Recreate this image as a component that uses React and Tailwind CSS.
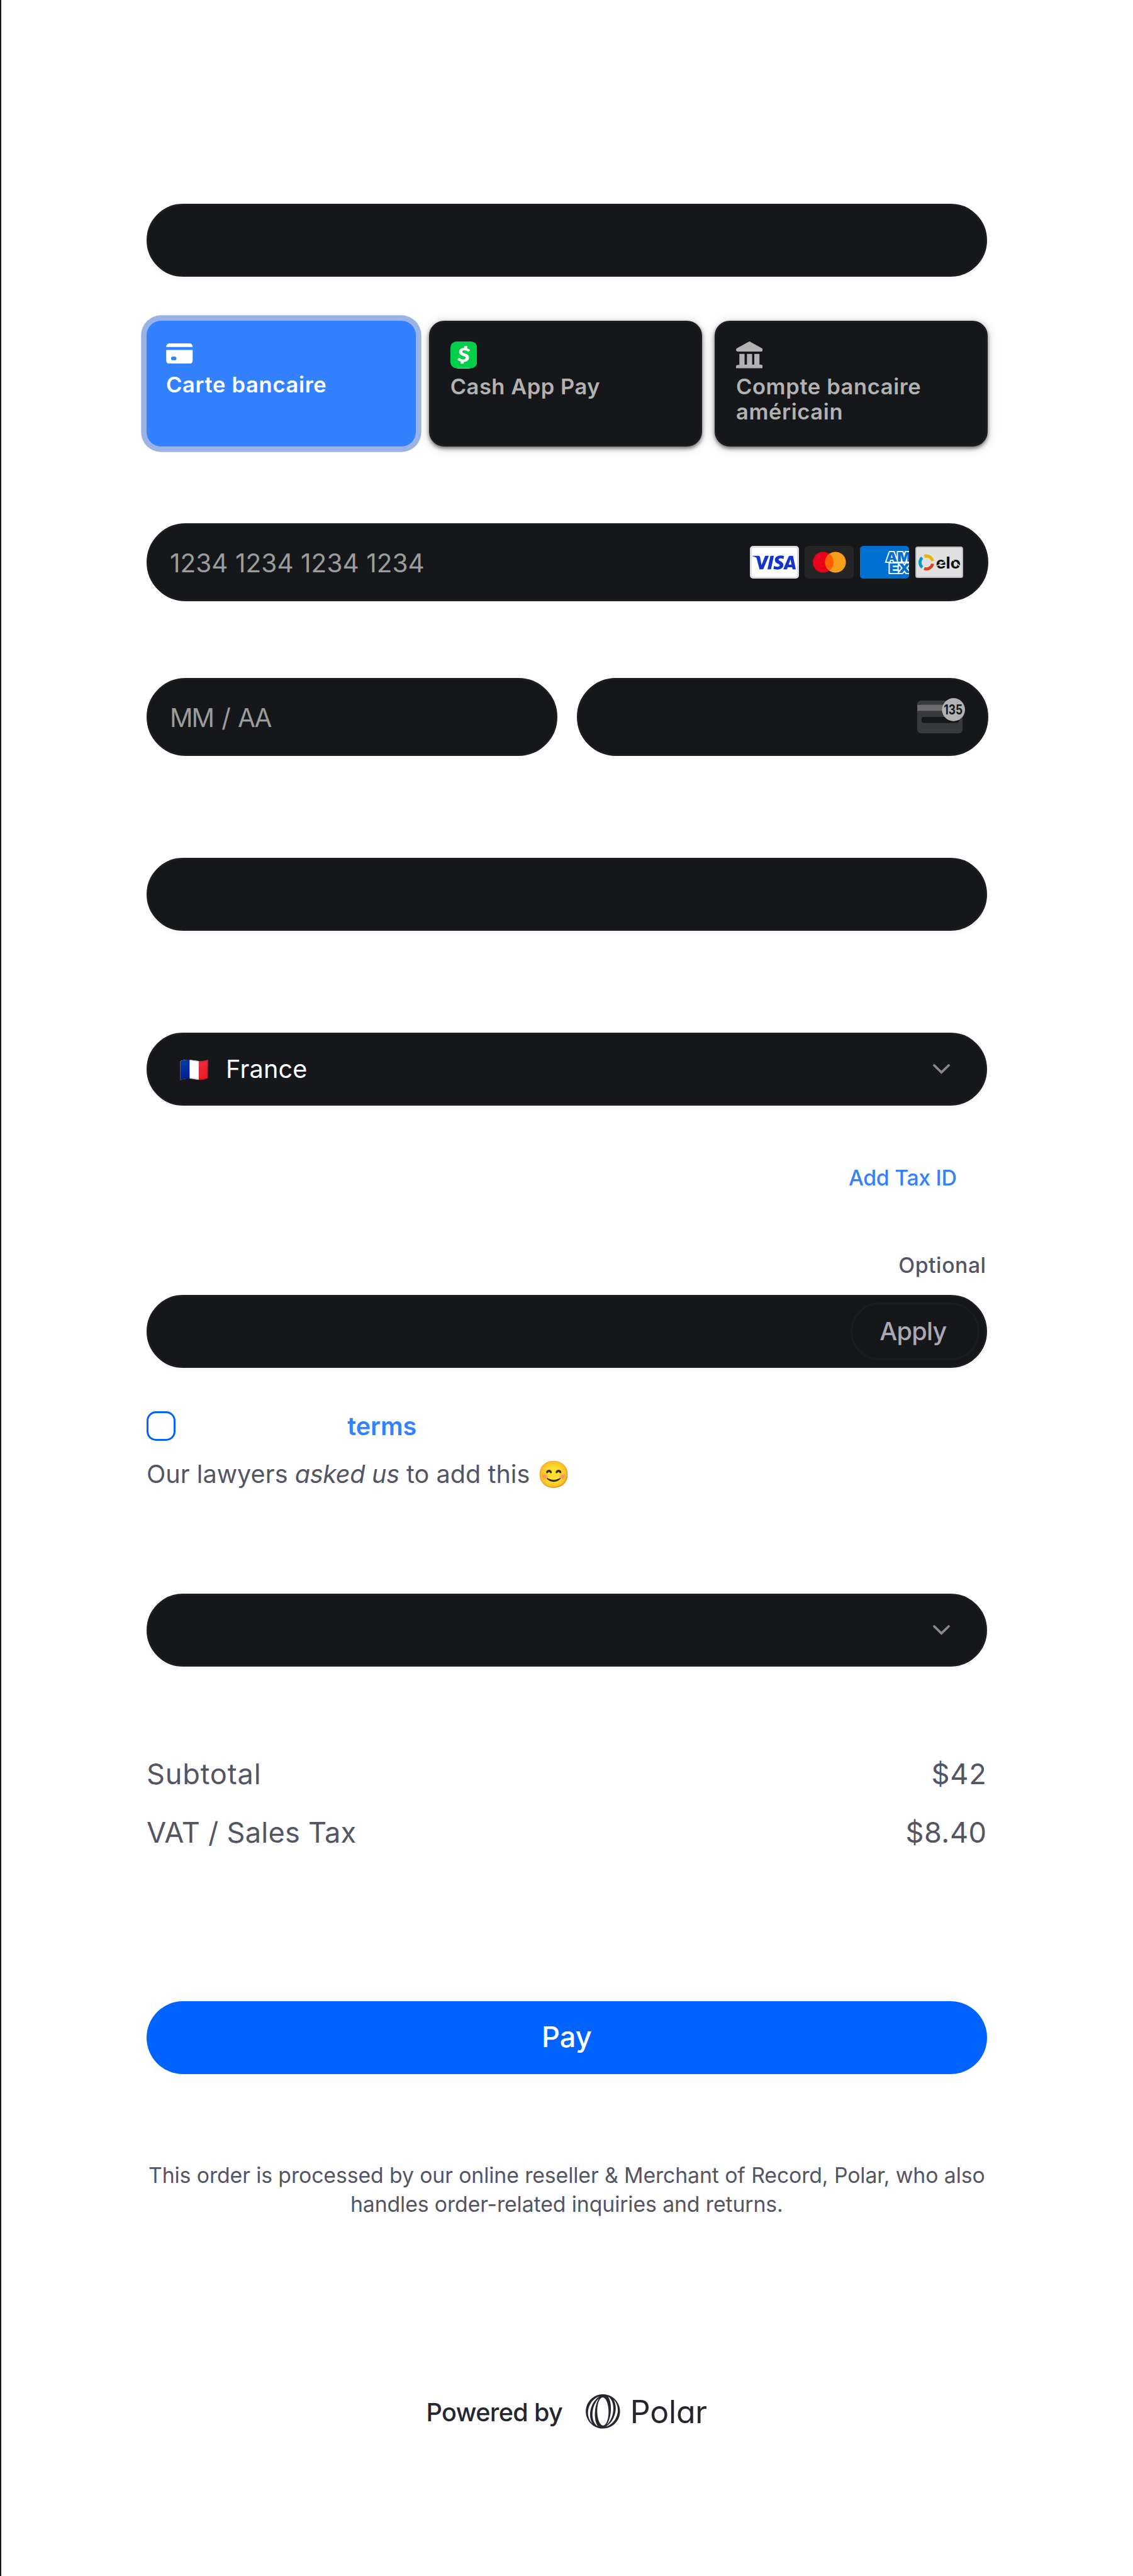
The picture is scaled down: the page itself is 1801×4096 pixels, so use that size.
import { SiVisa, SiCashapp } from "react-icons/si";

function Chevron() {
  return (
    <svg className="h-4 w-[27px] shrink-0 overflow-visible" viewBox="0 0 27 16" fill="none">
      <path d="M2 2 13.5 13 25 2" stroke="#8b8b8d" strokeWidth="3.8" strokeLinecap="round" />
    </svg>
  );
}

function Field({ className = "", children }) {
  return (
    <div
      className={`flex h-[116px] w-full shrink-0 items-center rounded-full border-[3px] border-[#1c1d21] bg-[#15171a] shadow-[0_3px_6px_rgba(0,0,0,0.05)] ${className}`}
    >
      {children}
    </div>
  );
}

function StripeField({ className = "", children }) {
  return (
    <div
      className={`flex h-[124px] items-center rounded-full border-[3px] border-[#1c1d21] bg-[#15171a] pl-[34px] text-[40.5px] leading-[50px] text-[#9c9c9b] ${className}`}
    >
      {children}
    </div>
  );
}

function Tab({ className = "", children }) {
  return (
    <div
      className={`flex h-[200px] w-[434px] shrink-0 flex-col items-start rounded-[24px] border-[3px] border-[#1c1d20] bg-[#15171a] pt-[30px] pl-[31px] text-[34.5px] leading-[40.3px] font-semibold text-[#b2b2b2] shadow-[0_3px_6px_rgba(0,0,0,0.55),0_2px_18px_rgba(0,0,0,0.16)] ${className}`}
    >
      {children}
    </div>
  );
}

function CardIcon() {
  return (
    <svg className="h-[32.5px] w-[42.5px]" viewBox="0 0 44 34" fill="#fff">
      <path d="M6 0H38Q44 0 44 6H0Q0 0 6 0Z" />
      <path
        fillRule="evenodd"
        d="M0 11H44V28Q44 34 38 34H6Q0 34 0 28ZM11 22A3 3 0 0 0 11 28H14A3 3 0 0 0 14 22Z"
      />
    </svg>
  );
}

function BankIcon() {
  return (
    <svg className="size-[42.5px]" viewBox="0 0 44 44" fill="#b2b2b2">
      <path d="M20.6 .5Q22-.4 23.4 .5L42.6 11.2Q44 12 44 14 44 16.5 41.5 16.5H2.500Q0 16.500 0 14 0 12 1.4 11.2Z" />
      <path d="M5.500 20.500H14V38H18V20.500H26.500V38H30V20.500H38.500V38H41.500Q44 38.500 44 41V44H0V41Q0 38.500 2.500 38.500H5.500Z" />
    </svg>
  );
}

function Visa() {
  return (
    <span className="flex h-[52px] w-[78px] items-center justify-center overflow-hidden rounded-[5px] border-[3px] border-[#dedede] bg-white">
      <SiVisa className="size-[69px] shrink-0 text-[#1434cb]" />
    </span>
  );
}

function Mastercard() {
  return (
    <svg className="h-[52px] w-[78px]" viewBox="0 0 81 54">
      <clipPath id="mc-left">
        <circle cx="30.700" cy="27" r="17.200" />
      </clipPath>
      <rect width="81" height="54" rx="6" fill="#252525" />
      <circle cx="30.700" cy="27" r="17.200" fill="#eb001b" />
      <circle cx="51" cy="27" r="17.200" fill="#f79e1b" />
      <circle cx="51" cy="27" r="17.200" fill="#ff5f00" clipPath="url(#mc-left)" />
    </svg>
  );
}

function Amex() {
  return (
    <svg className="h-[52px] w-[78px] rounded-[5px]" viewBox="0 0 81 54">
      <rect width="81" height="54" fill="#016fd0" />
      <g
        fill="#016fd0"
        stroke="#fff"
        strokeWidth="3.600"
        paintOrder="stroke"
        fontFamily="Inter, sans-serif"
        fontWeight="900"
        fontSize="21.500"
      >
        <text x="43" y="26" textLength="41" lengthAdjust="spacingAndGlyphs">AM</text>
        <text x="48" y="44.500" textLength="35" lengthAdjust="spacingAndGlyphs">EX</text>
      </g>
    </svg>
  );
}

function Elo() {
  return (
    <svg className="h-[50px] w-[76px]" viewBox="0 0 79 52">
      <rect x="1" y="1" width="77" height="50" rx="3" fill="#e0e0e0" stroke="#bdbdbd" strokeWidth="2" />
      <g fill="none" strokeWidth="5">
        <path d="M14.800 16.200A10.600 10.600 0 0 1 28.500 24" stroke="#e5b50f" />
        <path d="M28.600 28.500A10.600 10.600 0 0 1 14.600 36.400" stroke="#d94226" />
        <path d="M11.400 34.400A10.600 10.600 0 0 1 11.200 18.500" stroke="#0a96c8" />
      </g>
      <text x="34" y="36" fill="#0a0a0a" fontFamily="Inter, sans-serif" fontWeight="700" fontSize="26" textLength="41" lengthAdjust="spacingAndGlyphs">
        elo
      </text>
      <path d="M36 32 48 25M60 20 64 24M70 29 75 34" stroke="#e0e0e0" strokeWidth="1.500" />
    </svg>
  );
}

function CvcIcon() {
  return (
    <svg className="mb-[5px] h-14 w-[75px] overflow-visible" viewBox="0 0 78 58">
      <rect y="4" width="75" height="54" rx="6" fill="#38393b" />
      <rect y="11" width="75" height="10" fill="#6c6c6e" />
      <rect x="7" y="31" width="62" height="10" rx="4" fill="#15171a" />
      <circle cx="60" cy="19" r="19" fill="#b2b2b2" />
      <text x="44" y="27" fill="#15171a" fontFamily="Inter, sans-serif" fontWeight="700" fontSize="22" textLength="31" lengthAdjust="spacingAndGlyphs">
        135
      </text>
    </svg>
  );
}

function PolarMark() {
  return (
    <svg className="size-[54.6px]" viewBox="0 0 300 300" fill="#26272e">
      <path
        fillRule="evenodd"
        clipRule="evenodd"
        d="M66.4284 274.26C134.876 320.593 227.925 302.666 274.258 234.219C320.593 165.771 302.666 72.7222 234.218 26.3885C165.77 -19.9451 72.7209 -2.0181 26.3873 66.4297C-19.9465 134.877 -2.01938 227.927 66.4284 274.26ZM47.9555 116.67C30.8375 169.263 36.5445 221.893 59.2454 256.373C18.0412 217.361 7.27564 150.307 36.9437 92.318C55.9152 55.2362 87.5665 29.3937 122.5 18.3483C90.5911 36.7105 62.5549 71.8144 47.9555 116.67ZM175.347 283.137C211.377 272.606 244.211 246.385 263.685 208.322C293.101 150.825 282.768 84.4172 242.427 45.2673C264.22 79.7626 269.473 131.542 252.631 183.287C237.615 229.421 208.385 265.239 175.347 283.137ZM183.627 266.229C207.945 245.418 228.016 210.604 236.936 168.79C251.033 102.693 232.551 41.1978 195.112 20.6768C214.97 47.3945 225.022 99.2902 218.824 157.333C214.085 201.724 200.814 240.593 183.627 266.229ZM63.7178 131.844C49.5155 198.43 68.377 260.345 106.374 280.405C85.9962 254.009 75.5969 201.514 81.8758 142.711C86.5375 99.0536 99.4504 60.737 116.225 35.0969C92.2678 55.983 72.5384 90.4892 63.7178 131.844ZM199.834 149.561C200.908 217.473 179.59 272.878 152.222 273.309C124.853 273.742 101.797 219.039 100.724 151.127C99.6511 83.2138 120.968 27.8094 148.337 27.3777C175.705 26.946 198.762 81.648 199.834 149.561Z"
      />
    </svg>
  );
}

export default function App() {
  return (
    <div className="h-[4096px] overflow-hidden border-l-2 border-[#15171a] bg-white pt-[324px] pl-[231px] font-['Inter',sans-serif] text-[#545564]">
      <div className="flex w-[1335.6px] flex-col">
        <Field />

        <div className="mt-[70px] flex gap-[20.3px]">
          <div className="flex h-[200px] w-[428.4px] shrink-0 flex-col items-start rounded-[23px] bg-[#3381ff] pt-[35.5px] pl-[31px] text-[34.5px] leading-[40.3px] font-semibold text-white shadow-[0_0_0_8.700px_#99b3e4]">
            <CardIcon />
            <span className="mt-[14px] tracking-[0.68px]">Carte bancaire</span>
          </div>
          <Tab>
            <span className="rounded-[14px] bg-white">
              <SiCashapp className="size-[42.5px] text-[#00cf49]" />
            </span>
            <span className="mt-[9px] tracking-[0.5px]">Cash App Pay</span>
          </Tab>
          <Tab>
            <BankIcon />
            <span className="mt-[9px] tracking-[0.6px]">
              Compte bancaire
              <br />
              américain
            </span>
          </Tab>
        </div>

        <StripeField className="mt-[122px] w-[1337.6px] justify-between pr-[37px]">
          <span className="pt-[3px] tracking-[0.06px]">1234 1234 1234 1234</span>
          <span className="flex items-center gap-[9.6px]">
            <Visa />
            <Mastercard />
            <Amex />
            <Elo />
          </span>
        </StripeField>

        <div className="mt-[122px] flex w-[1337.6px] justify-between">
          <StripeField className="w-[653.4px]">
            <span className="pt-[3px] tracking-[-2.100px] [word-spacing:4px]">MM / AA</span>
          </StripeField>
          <StripeField className="w-[653.4px] justify-end pr-[35px]">
            <CvcIcon />
          </StripeField>
        </div>

        <Field className="mt-[162px]" />

        <Field className="mt-[162px] justify-between pr-[56px] pl-[49px]">
          <span className="flex items-center text-[39.600px] leading-[50px] text-white">
            <span className="w-[46px] text-[38px] whitespace-nowrap">🇫🇷</span>
            <span className="ml-[28px] tracking-[0.2px]">France</span>
          </span>
          <Chevron />
        </Field>

        <div className="mt-[92px] pr-[48px] text-right text-[33.8px] leading-[46px] font-medium tracking-[-0.3px] text-[#3381ff]">
          Add Tax ID
        </div>

        <div className="mt-[93px] pr-[1px] text-right text-[33.8px] leading-[46px] font-medium tracking-[0.5px]">
          Optional
        </div>
        <Field className="mt-[24px] justify-end pr-[8.400px]">
          <div className="flex h-[92.6px] w-[205.6px] items-center justify-center rounded-full border-[3px] border-[#1c1d21] pr-[6px] text-[39.600px] leading-[50px] font-medium tracking-[-0.7px] text-[#a9a8b4]">
            Apply
          </div>
        </Field>

        <div className="mt-[69.500px] flex h-[46px] items-center">
          <span className="size-[46.300px] rounded-[15px] border-[3px] border-[#0062ff]" />
          <span className="ml-[273px] text-[39.600px] leading-[46px] font-semibold tracking-[-0.15px] text-[#3381ff]">
            terms
          </span>
        </div>
        <div className="mt-[26px] flex h-[54px] items-center text-[39.600px] leading-[54px] tracking-[0.03px] whitespace-pre">
          <span>
            Our lawyers <em className="tracking-[-0.3px]">asked us</em> to add this{" "}
          </span>
          <span className="text-[42px]">😊</span>
        </div>

        <Field className="mt-[163.500px] justify-end pr-[56px]">
          <Chevron />
        </Field>

        <div className="mt-[141px] flex justify-between text-[45.2px] leading-[60px]">
          <span className="tracking-[0.78px]">Subtotal</span>
          <span className="tracking-[0.8px]">$42</span>
        </div>
        <div className="mt-[33px] flex justify-between text-[45.2px] leading-[60px]">
          <span className="tracking-[0.2px]">VAT / Sales Tax</span>
          <span className="tracking-[0.5px]">$8.40</span>
        </div>

        <div className="mt-[238px] flex h-[116px] items-center justify-center rounded-full bg-[#0062ff] pb-[2px] text-[45.2px] leading-[60px] font-medium text-white">
          Pay
        </div>

        <div className="mt-[138px] text-center text-[33.8px] leading-[46.3px] tracking-[-0.11px] whitespace-nowrap">
          This order is processed by our online reseller &amp; Merchant of Record, Polar, who also
          <br />
          handles order-related inquiries and returns.
        </div>

        <div className="mt-[278px] flex h-14 items-center justify-center text-[#26272e]">
          <span className="pt-[3px] text-[39.600px] leading-[56px] font-medium tracking-[-0.65px]">Powered by</span>
          <span className="ml-[37px]">
            <PolarMark />
          </span>
          <span className="ml-[16px] text-[50px] leading-[56px] tracking-[-0.2px] [font-feature-settings:'cv11']">
            Polar
          </span>
        </div>
      </div>
    </div>
  );
}
